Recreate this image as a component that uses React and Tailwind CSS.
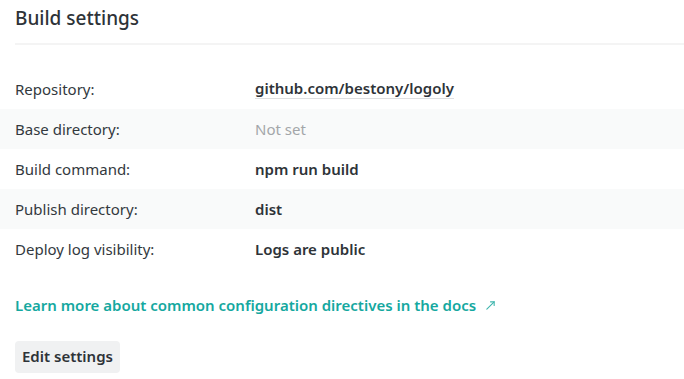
import React from "react";

const rows = [
  { label: "Repository:", value: "github.com/bestony/logoly", kind: "link" },
  { label: "Base directory:", value: "Not set", kind: "muted" },
  { label: "Build command:", value: "npm run build", kind: "bold" },
  { label: "Publish directory:", value: "dist", kind: "bold" },
  { label: "Deploy log visibility:", value: "Logs are public", kind: "bold" },
];

export default function App() {
  return (
    <div
      className="w-[684px] h-[379px] bg-white text-[#2e3338] overflow-hidden"
      style={{ fontFamily: '"Noto Sans", "Open Sans", sans-serif' }}
    >
      <div className="px-[15px] pt-[4px]">
        <h2 className="text-[19px] leading-[28px] font-medium text-[#2e3338]">Build settings</h2>
        <div className="mt-[11px] h-[2px] bg-[#f4f4f4] mr-[-15px]" />
      </div>
      <div className="mt-[24px] flex flex-col">
        {rows.map((r, i) => (
          <div
            key={r.label}
            className={`flex items-center h-[40px] px-[15px] text-[15px] ${i % 2 === 1 ? "bg-[#f9fafa]" : "bg-white"}`}
          >
            <div className="w-[240px] shrink-0 text-[#33393e]">{r.label}</div>
            {r.kind === "link" && (
              <span className="font-semibold border-b border-[#dedfe1] leading-[19px]">{r.value}</span>
            )}
            {r.kind === "muted" && <span className="text-[#a3a6a9]">{r.value}</span>}
            {r.kind === "bold" && <span className="font-semibold">{r.value}</span>}
          </div>
        ))}
      </div>
      <div className="px-[15px] mt-[25px] flex items-center text-[15px] font-semibold text-[#15a8a0]">
        <span>Learn more about common configuration directives in the docs</span>
        <svg className="ml-[9px] mt-[1px]" width="11" height="11" viewBox="0 0 12 12" fill="none" stroke="#3fb5ad" strokeWidth="1.2" strokeLinecap="round">
          <path d="M2 10L10 2" />
          <path d="M6 2H10V6" />
        </svg>
      </div>
      <div className="px-[15px] mt-[24px]">
        <button className="h-[32px] px-[7px] rounded-[4px] bg-[#f0f1f2] text-[15px] font-semibold text-[#2e3338]">
          Edit settings
        </button>
      </div>
    </div>
  );
}
